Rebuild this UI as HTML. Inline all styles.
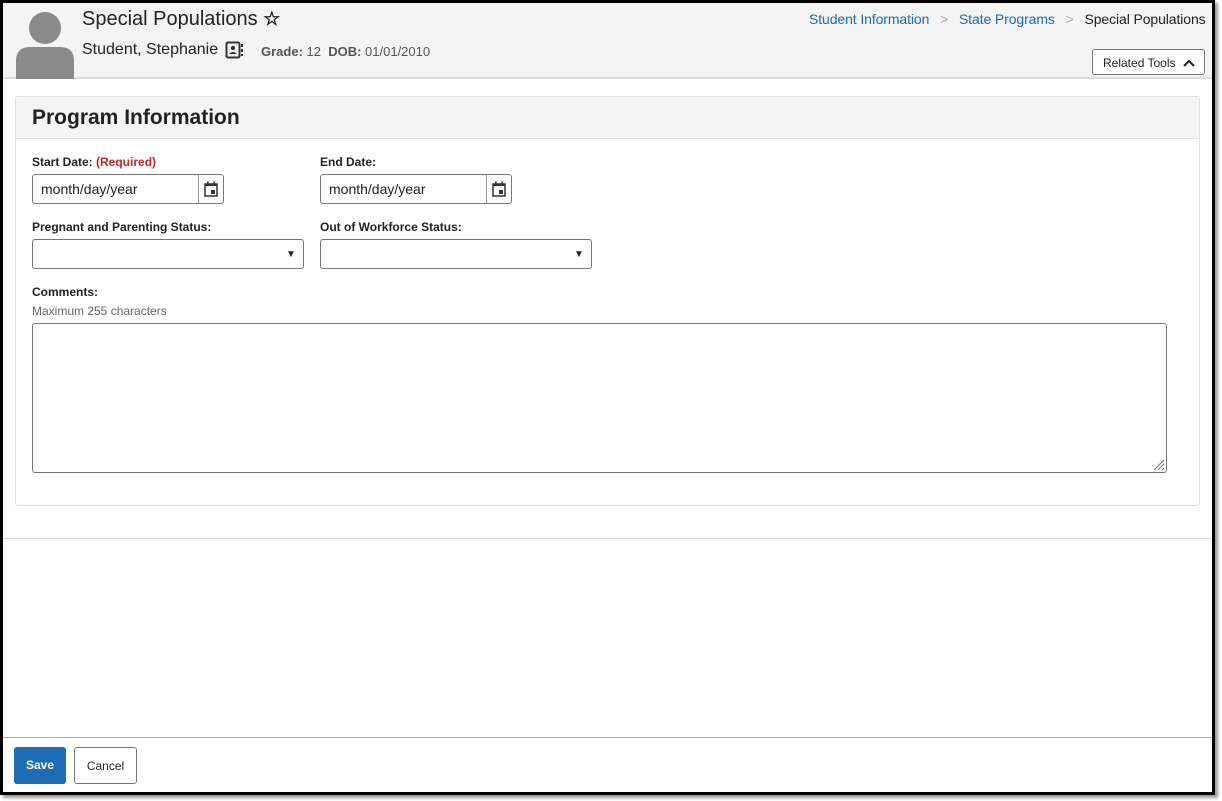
<!DOCTYPE html>
<html><head><meta charset="utf-8"><style>
*{box-sizing:border-box;margin:0;padding:0}
body{width:1222px;height:801px;background:#fff;font-family:"Liberation Sans",sans-serif;position:relative;overflow:hidden;color:#222}
.frame{position:absolute;left:0;top:0;width:1215px;height:795px;border:3px solid #000;box-shadow:3px 3px 3px #999;background:#fff;overflow:hidden}
.abs{position:absolute}
.hdr{left:0;top:0;width:1210px;height:76px;background:#f4f4f4;border-bottom:2px solid #ddd}
.lbl{font-size:12px;font-weight:bold;color:#222}
.inp{border:1px solid #777;border-radius:3px;background:#fff}
</style></head><body>
<div class="frame">
 <div class="abs hdr"></div>
 <svg class="abs" style="left:13px;top:6px" width="58" height="70"><circle cx="29" cy="19" r="16" fill="#8a8a8a"/><path d="M0 70 V52 Q0 38 14 38 H44 Q58 38 58 52 V70Z" fill="#8a8a8a"/></svg>
 <div class="abs" style="left:79px;top:5px;font-size:20px;color:#222">Special Populations <span style="font-size:19px;font-weight:bold">☆</span></div>
 <div class="abs" style="left:79px;top:38px;font-size:16px;color:#222">Student, Stephanie</div>
 <svg class="abs" style="left:222px;top:38px" width="20" height="18"><rect x="1.5" y="1.5" width="13" height="15" rx="1.5" fill="none" stroke="#333" stroke-width="2"/><circle cx="8" cy="7" r="2.2" fill="#333"/><path d="M4 13 Q8 9 12 13Z" fill="#333"/><rect x="16" y="3" width="2" height="3" fill="#333"/><rect x="16" y="8" width="2" height="3" fill="#333"/><rect x="16" y="13" width="2" height="2" fill="#333"/></svg>
 <div class="abs" style="left:258px;top:41px;font-size:13px;color:#555"><b>Grade:</b> 12 &nbsp;<b>DOB:</b> 01/01/2010</div>
 <div class="abs" style="left:806px;top:8px;font-size:14px;color:#1e6cb3;letter-spacing:-0.1px">Student Information <span style="color:#aaa;margin:0 7px">&gt;</span> State Programs <span style="color:#aaa;margin:0 7px">&gt;</span> <span style="color:#222">Special Populations</span></div>
 <div class="abs inp" style="left:1089px;top:46px;width:113px;height:26px;font-size:12px;padding:6px 0 0 10px">Related Tools <svg width="12" height="8" style="margin-left:4px"><path d="M1 7 L6 2 L11 7" fill="none" stroke="#222" stroke-width="2"/></svg></div>

 <div class="abs" style="left:12px;top:93px;width:1185px;height:410px;border:1px solid #e2e2e2;border-radius:3px"></div>
 <div class="abs" style="left:13px;top:94px;width:1183px;height:42px;background:#f4f4f4;border-bottom:1px solid #e2e2e2"></div>
 <div class="abs" style="left:29px;top:103px;font-size:21px;font-weight:bold;color:#222">Program Information</div>

 <div class="abs lbl" style="left:29px;top:152px">Start Date: <span style="color:#c0282d">(Required)</span></div>
 <div class="abs inp" style="left:29px;top:171px;width:192px;height:30px"><span class="abs" style="left:8px;top:6px;font-size:14px">month/day/year</span><div class="abs" style="left:165px;top:0;height:28px;border-left:1px solid #999"></div><svg class="abs" style="left:171px;top:6px" width="14" height="16"><rect x="1" y="3" width="12" height="12" fill="none" stroke="#333" stroke-width="1.5"/><rect x="1" y="3" width="12" height="2" fill="#333"/><rect x="3" y="0.5" width="1.5" height="3" fill="#333"/><rect x="9.5" y="0.5" width="1.5" height="3" fill="#333"/><rect x="7" y="9" width="4" height="4" fill="#333"/></svg></div>
 <div class="abs lbl" style="left:317px;top:152px">End Date:</div>
 <div class="abs inp" style="left:317px;top:171px;width:192px;height:30px"><span class="abs" style="left:8px;top:6px;font-size:14px">month/day/year</span><div class="abs" style="left:165px;top:0;height:28px;border-left:1px solid #999"></div><svg class="abs" style="left:171px;top:6px" width="14" height="16"><rect x="1" y="3" width="12" height="12" fill="none" stroke="#333" stroke-width="1.5"/><rect x="1" y="3" width="12" height="2" fill="#333"/><rect x="3" y="0.5" width="1.5" height="3" fill="#333"/><rect x="9.5" y="0.5" width="1.5" height="3" fill="#333"/><rect x="7" y="9" width="4" height="4" fill="#333"/></svg></div>

 <div class="abs lbl" style="left:29px;top:217px">Pregnant and Parenting Status:</div>
 <div class="abs inp" style="left:29px;top:236px;width:272px;height:30px"><span class="abs" style="left:253px;top:9px;font-size:10px">▼</span></div>
 <div class="abs lbl" style="left:317px;top:217px">Out of Workforce Status:</div>
 <div class="abs inp" style="left:317px;top:236px;width:272px;height:30px"><span class="abs" style="left:253px;top:9px;font-size:10px">▼</span></div>

 <div class="abs lbl" style="left:29px;top:282px">Comments:</div>
 <div class="abs" style="left:29px;top:301px;font-size:12px;color:#666">Maximum 255 characters</div>
 <div class="abs inp" style="left:29px;top:320px;width:1135px;height:150px"><svg class="abs" style="right:1px;bottom:1px" width="14" height="14"><path d="M13 3 L3 13 M13 7 L7 13 M13 11 L11 13" stroke="#777" stroke-width="1"/></svg></div>

 <div class="abs" style="left:0;top:535px;width:1210px;border-top:1px solid #ddd"></div>
 <div class="abs" style="left:0;top:734px;width:1210px;border-top:1px solid #aaa"></div>
 <div class="abs" style="left:11px;top:744px;width:52px;height:37px;background:#1e6cb3;border-radius:3px;color:#fff;font-size:12px;font-weight:bold;text-align:center;line-height:37px">Save</div>
 <div class="abs" style="left:71px;top:744px;width:63px;height:37px;border:1px solid #777;border-radius:3px;font-size:12px;text-align:center;line-height:37px">Cancel</div>
</div>
</body></html>
